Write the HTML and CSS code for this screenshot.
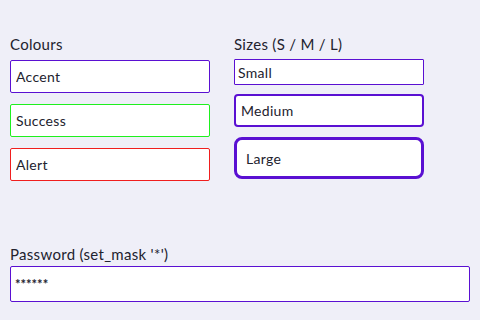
FILE: index.html
```html
<!DOCTYPE html>
<html lang="en">
<head>
    <meta charset="UTF-8">
    <meta name="viewport" content="width=device-width, initial-scale=1.0">
    <title>Text fields</title>
    <link rel="stylesheet" href="styles.css">
</head>
<body>
    <div class="screen">
        <div class="columns">
            <div class="group colours">
                <div class="label">Colours</div>
                <input class="field accent" type="text" value="Accent">
                <input class="field success" type="text" value="Success">
                <input class="field alert" type="text" value="Alert">
            </div>
            <div class="group sizes">
                <div class="label">Sizes (S / M / L)</div>
                <input class="field small" type="text" value="Small">
                <input class="field medium" type="text" value="Medium">
                <input class="field large" type="text" value="Large">
            </div>
        </div>
        <div class="group password">
            <div class="label">Password (set_mask '*')</div>
            <input class="field pass" type="text" value="******">
        </div>
    </div>
</body>
</html>
```

FILE: styles.css
```css
body { margin: 0; background: #efeff8; font-family: Lato, "Open Sans", sans-serif; color: #22222e; }
.screen { width: 480px; height: 320px; box-sizing: border-box; padding: 35px 10px 0 10px; }
.columns { display: flex; gap: 24px; height: 210px; }
.group { display: flex; flex-direction: column; }
.colours { width: 200px; gap: 11px; }
.sizes { width: 190px; }
.label { font-size: 15px; letter-spacing: 0.3px; line-height: 18px; height: 18px; margin-bottom: -3px; }
.colours .label { margin-bottom: -4px; }
.field { box-sizing: border-box; width: 100%; margin: 0; background: #fff; font-family: inherit; font-size: 14px; letter-spacing: 0.3px; color: #22222e; outline: none; }
.accent, .success, .alert { height: 33px; border: 1px solid #5a10d2; border-radius: 2px; padding: 0 5px; }
.success { border-color: #1ef01e; }
.alert { border-color: #f01e1e; }
.small { height: 26px; border: 1px solid #5a10d2; border-radius: 1px; padding: 0 3px; margin-top: 9px; }
.medium { height: 33px; border: 2px solid #5a10d2; border-radius: 4px; padding: 0 5px; margin-top: 9px; }
.large { height: 42px; border: 3px solid #5a10d2; border-radius: 8px; padding: 0 9px; margin-top: 10px; }
.password .label { margin-bottom: 3px; }
.pass { height: 36px; border: 1px solid #5a10d2; border-radius: 2px; padding: 0 4px; font-size: 13px; font-weight: bold; letter-spacing: 0; }
```
